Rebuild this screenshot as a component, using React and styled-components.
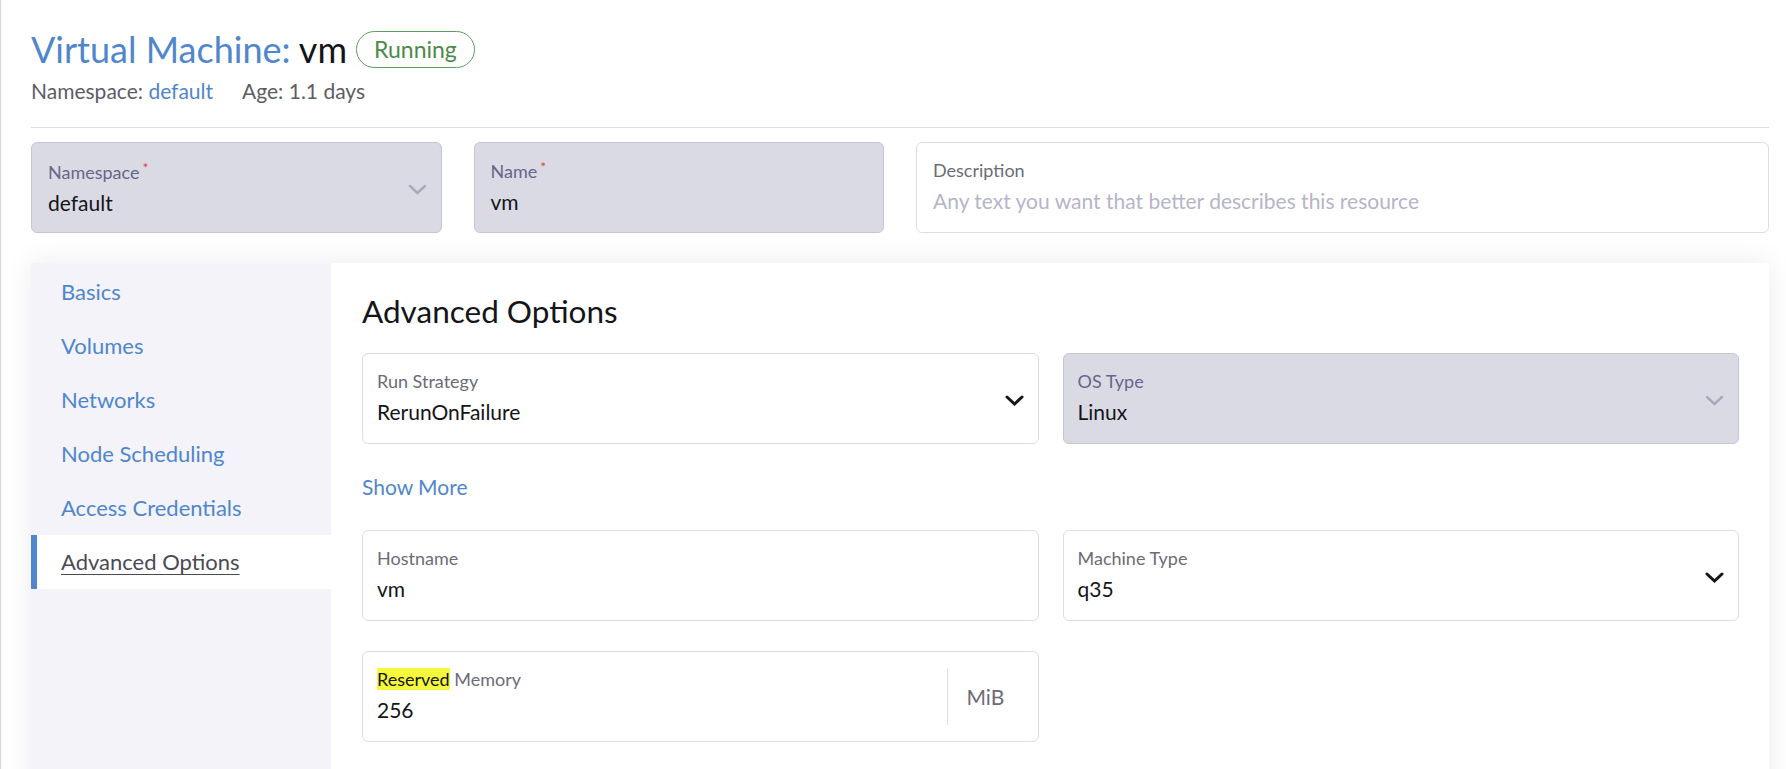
import React from 'react';
import styled, { createGlobalStyle } from 'styled-components';

const GlobalStyle = createGlobalStyle`
  html, body { margin: 0; padding: 0; background: #fff; }
  body {
    font-family: Lato, "Noto Sans", "Liberation Sans", sans-serif;
    color: #141419;
    overflow: hidden;
  }
  * { box-sizing: border-box; }
`;

const Page = styled.div`
  min-height: 100vh;
  border-left: 1px solid #d6d6e1;
  padding: 0 17px 0 30px;
`;

const Header = styled.header`
  padding-top: 28px;
`;

const TitleRow = styled.div`
  display: flex;
  align-items: center;
  gap: 9px;
`;

const Title = styled.h1`
  margin: 0;
  font-size: 36px;
  line-height: 42px;
  font-weight: 400;
  color: #141419;
`;

const TitleType = styled.span`
  color: #4f86cc;
`;

const Badge = styled.span`
  display: inline-flex;
  align-items: center;
  height: 37px;
  padding: 0 17px;
  border: 1px solid #5f9d5d;
  border-radius: 19px;
  color: #4c8a4b;
  font-size: 23px;
`;

const Meta = styled.div`
  display: flex;
  gap: 29px;
  margin-top: 6px;
  font-size: 21px;
  line-height: 30px;
  color: #5c5c66;
`;

const Link = styled.a`
  color: #4f86cc;
  text-decoration: none;
`;

const Divider = styled.hr`
  border: 0;
  border-top: 1px solid #dcdee7;
  margin: 21px 0 14px;
`;

const TopGrid = styled.div`
  display: grid;
  grid-template-columns: repeat(12, 1fr);
  column-gap: 32px;
`;

const Field = styled.div`
  display: flex;
  height: 91px;
  border: 1px solid ${p => (p.$disabled ? '#c5c5d4' : '#dcdee7')};
  background: ${p => (p.$disabled ? '#dadae4' : '#ffffff')};
  border-radius: 6px;
  grid-column: span ${p => p.$span || 1};
`;

const FieldBody = styled.div`
  flex: 1;
  min-width: 0;
  padding: ${p => p.$padTop ?? 16}px ${p => p.$padX ?? 16}px 0;
`;

const Label = styled.div`
  font-size: 18px;
  line-height: 22px;
  color: ${p => (p.$disabled ? '#66668a' : '#6c6c76')};
  white-space: nowrap;
`;

const Req = styled.span`
  color: #e0463c;
  font-size: 14px;
  vertical-align: top;
  line-height: 14px;
  margin-left: 3px;
`;

const Mark = styled.span`
  background: #f5f83c;
  color: #141419;
`;

const Value = styled.div`
  margin-top: 7px;
  font-size: 21px;
  line-height: 26px;
  color: ${p => (p.$placeholder ? '#b5b5c8' : '#141419')};
  white-space: nowrap;
`;

const ChevronBox = styled.div`
  display: flex;
  align-items: center;
  padding: 4px 14px 0 8px;
  color: ${p => (p.$muted ? '#a9a9bb' : '#141419')};
`;

const Addon = styled.div`
  display: flex;
  align-items: center;
  width: 91px;
  margin: 16px 0;
  padding-left: 19px;
  border-left: 1px solid #dcdee7;
  color: #6c6c76;
  font-size: 21px;
`;

const Panel = styled.div`
  display: flex;
  margin-top: 30px;
  min-height: 540px;
  box-shadow: 0 0 28px rgba(30, 30, 60, 0.08);
`;

const Tabs = styled.nav`
  width: 300px;
  flex: none;
  padding-top: 2px;
  background: #f3f3f9;
  display: flex;
  flex-direction: column;
`;

const Tab = styled.a`
  display: block;
  height: 54px;
  line-height: 54px;
  font-size: 22px;
  padding-left: ${p => (p.$active ? 24 : 30)}px;
  border-left: ${p => (p.$active ? '6px solid #4f86cc' : '0')};
  background: ${p => (p.$active ? '#ffffff' : 'transparent')};
  color: ${p => (p.$active ? '#4a4a55' : '#4f86cc')};
  text-decoration: ${p => (p.$active ? 'underline' : 'none')};
  text-underline-offset: 4px;
  text-decoration-thickness: 1px;
`;

const Content = styled.section`
  flex: 1;
  background: #fff;
  padding: 28px 30px 40px 31px;
`;

const Heading = styled.h2`
  margin: 0 0 22px;
  font-size: 31.5px;
  line-height: 40px;
  font-weight: 400;
  color: #141419;
`;

const FormGrid = styled.div`
  display: grid;
  grid-template-columns: 1fr 1fr;
  column-gap: 24px;
  row-gap: 30px;
`;

const ShowMore = styled.a`
  grid-column: 1 / -1;
  font-size: 21px;
  line-height: 25px;
  margin-bottom: 1px;
  color: #4f86cc;
  text-decoration: none;
`;

const Chevron = ({ muted }) => (
  <ChevronBox $muted={muted}>
    <svg width="19" height="11" viewBox="0 0 19 11" fill="none">
      <path
        d="M2 2 L9.5 9 L17 2"
        stroke="currentColor"
        strokeWidth={muted ? 2.4 : 3}
        strokeLinecap="round"
        strokeLinejoin="miter"
      />
    </svg>
  </ChevronBox>
);

const tabs = ['Basics', 'Volumes', 'Networks', 'Node Scheduling', 'Access Credentials', 'Advanced Options'];

export default function App() {
  return (
    <>
      <GlobalStyle />
      <Page>
        <Header>
          <TitleRow>
            <Title>
              <TitleType>Virtual Machine:</TitleType> vm
            </Title>
            <Badge>Running</Badge>
          </TitleRow>
          <Meta>
            <span>
              Namespace: <Link>default</Link>
            </span>
            <span>Age: 1.1 days</span>
          </Meta>
        </Header>
        <Divider />
        <TopGrid>
          <Field $disabled $span={3}>
            <FieldBody $padTop={18}>
              <Label $disabled>
                Namespace<Req>*</Req>
              </Label>
              <Value>default</Value>
            </FieldBody>
            <Chevron muted />
          </Field>
          <Field $disabled $span={3}>
            <FieldBody $padTop={17}>
              <Label $disabled>
                Name<Req>*</Req>
              </Label>
              <Value>vm</Value>
            </FieldBody>
          </Field>
          <Field $span={6}>
            <FieldBody>
              <Label>Description</Label>
              <Value $placeholder>Any text you want that better describes this resource</Value>
            </FieldBody>
          </Field>
        </TopGrid>
        <Panel>
          <Tabs>
            {tabs.map(t => (
              <Tab key={t} $active={t === 'Advanced Options'}>
                {t}
              </Tab>
            ))}
          </Tabs>
          <Content>
            <Heading>Advanced Options</Heading>
            <FormGrid>
              <Field>
                <FieldBody $padX={14}>
                  <Label>Run Strategy</Label>
                  <Value>RerunOnFailure</Value>
                </FieldBody>
                <Chevron />
              </Field>
              <Field $disabled>
                <FieldBody $padX={14}>
                  <Label $disabled>OS Type</Label>
                  <Value>Linux</Value>
                </FieldBody>
                <Chevron muted />
              </Field>
              <ShowMore>Show More</ShowMore>
              <Field>
                <FieldBody $padX={14}>
                  <Label>Hostname</Label>
                  <Value>vm</Value>
                </FieldBody>
              </Field>
              <Field>
                <FieldBody $padX={14}>
                  <Label>Machine Type</Label>
                  <Value>q35</Value>
                </FieldBody>
                <Chevron />
              </Field>
              <Field>
                <FieldBody $padX={14}>
                  <Label>
                    <Mark>Reserved</Mark> Memory
                  </Label>
                  <Value>256</Value>
                </FieldBody>
                <Addon>MiB</Addon>
              </Field>
            </FormGrid>
          </Content>
        </Panel>
      </Page>
    </>
  );
}
